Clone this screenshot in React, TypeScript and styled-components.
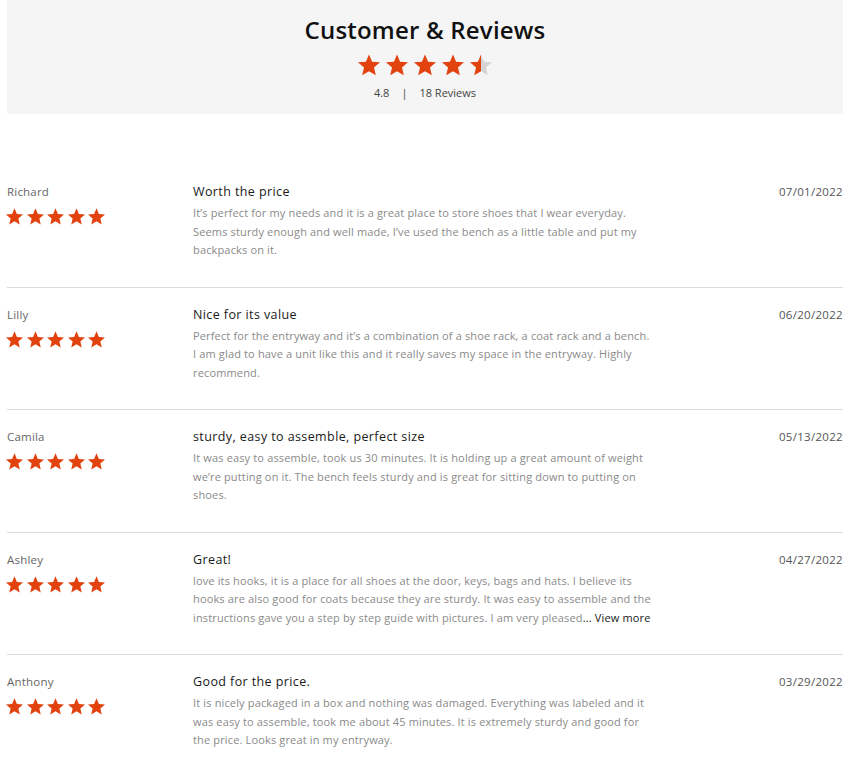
import React from "react";
import styled, { createGlobalStyle } from "styled-components";

const GlobalStyle = createGlobalStyle`
  html, body { margin: 0; padding: 0; background: #fff; }
  body { font-family: "Open Sans", "Liberation Sans", sans-serif; }
`;

const STAR_PATH =
  "M12 17.27L18.18 21l-1.64-7.03L22 9.24l-7.19-.61L12 2 9.19 8.63 2 9.24l5.46 4.73L5.82 21z";

const ORANGE = "#e2420e";

const Page = styled.div`
  padding: 0 7px;
`;

const Header = styled.header`
  background: #f5f5f5;
  height: 114px;
  display: flex;
  flex-direction: column;
  align-items: center;
  box-sizing: border-box;
  padding-top: 13px;
`;

const Title = styled.h1`
  margin: 0;
  font-size: 24px;
  line-height: 34px;
  font-weight: 600;
  color: #111;
  letter-spacing: 0.2px;
`;

const StarRow = styled.div<{ $gap: number }>`
  display: flex;
  gap: ${(p) => p.$gap}px;
  align-items: center;
`;

const HeaderStars = styled(StarRow)`
  margin-top: 7px;
`;

const Summary = styled.div`
  margin-top: 9px;
  font-size: 11px;
  line-height: 16px;
  color: #444;
  display: flex;
  gap: 12px;
`;

const List = styled.div`
  margin-top: 51px;
`;

const Row = styled.div`
  display: grid;
  grid-template-columns: 186px 1fr auto;
  padding: 18px 0 27px;
  border-bottom: 1px solid #dcdcdc;
  &:last-child {
    border-bottom: none;
  }
`;

const Author = styled.div`
  display: flex;
  flex-direction: column;
`;

const Name = styled.div`
  font-size: 11.5px;
  line-height: 18px;
  color: #666;
  font-weight: 500;
  letter-spacing: 0.2px;
`;

const AuthorStars = styled(StarRow)`
  margin-top: 7px;
  margin-left: -1px;
`;

const Content = styled.div`
  display: flex;
  flex-direction: column;
`;

const ReviewTitle = styled.div`
  font-size: 12.5px;
  line-height: 18px;
  font-weight: 500;
  color: #1a1a1a;
  letter-spacing: 0.4px;
`;

const Body = styled.div`
  margin-top: 3px;
  font-size: 11px;
  line-height: 18.5px;
  color: #8a8a8a;
  letter-spacing: 0.15px;
`;

const Line = styled.div`
  white-space: nowrap;
`;

const More = styled.span`
  color: #1a1a1a;
  font-weight: 500;
`;

const DateText = styled.div`
  font-size: 11.5px;
  line-height: 18px;
  font-weight: 500;
  color: #555;
  letter-spacing: 0.3px;
`;

const Star: React.FC<{ size: number; fill?: number; id?: string }> = ({
  size,
  fill = 1,
  id,
}) => {
  if (fill >= 1) {
    return (
      <svg width={size} height={size} viewBox="2 2 20 19.3">
        <path d={STAR_PATH} fill={ORANGE} />
      </svg>
    );
  }
  const gid = id || "half";
  return (
    <svg width={size} height={size} viewBox="2 2 20 19.3">
      <defs>
        <linearGradient id={gid} x1="0" x2="1" y1="0" y2="0">
          <stop offset={fill} stopColor={ORANGE} />
          <stop offset={fill} stopColor="#d4d4d4" />
        </linearGradient>
      </defs>
      <path d={STAR_PATH} fill={`url(#${gid})`} />
    </svg>
  );
};

type Review = {
  name: string;
  title: string;
  date: string;
  lines: string[];
  more?: boolean;
};

const reviews: Review[] = [
  {
    name: "Richard",
    title: "Worth the price",
    date: "07/01/2022",
    lines: [
      "It\u2019s perfect for my needs and it is a great place to store shoes that I wear everyday.",
      "Seems sturdy enough and well made, I\u2019ve used the bench as a little table and put my",
      "backpacks on it.",
    ],
  },
  {
    name: "Lilly",
    title: "Nice for its value",
    date: "06/20/2022",
    lines: [
      "Perfect for the entryway and it\u2019s a combination of a shoe rack, a coat rack and a bench.",
      "I am glad to have a unit like this and it really saves my space in the entryway. Highly",
      "recommend.",
    ],
  },
  {
    name: "Camila",
    title: "sturdy, easy to assemble, perfect size",
    date: "05/13/2022",
    lines: [
      "It was easy to assemble, took us 30 minutes. It is holding up a great amount of weight",
      "we\u2019re putting on it. The bench feels sturdy and is great for sitting down to putting on",
      "shoes.",
    ],
  },
  {
    name: "Ashley",
    title: "Great!",
    date: "04/27/2022",
    lines: [
      "love its hooks, it is a place for all shoes at the door, keys, bags and hats. I believe its",
      "hooks are also good for coats because they are sturdy. It was easy to assemble and the",
      "instructions gave you a step by step guide with pictures. I am very pleased",
    ],
    more: true,
  },
  {
    name: "Anthony",
    title: "Good for the price.",
    date: "03/29/2022",
    lines: [
      "It is nicely packaged in a box and nothing was damaged. Everything was labeled and it",
      "was easy to assemble, took me about 45 minutes. It is extremely sturdy and good for",
      "the price. Looks great in my entryway.",
    ],
  },
];

export default function App() {
  return (
    <Page>
      <GlobalStyle />
      <Header>
        <Title>Customer &amp; Reviews</Title>
        <HeaderStars $gap={6}>
          {[0, 1, 2, 3].map((i) => (
            <Star key={i} size={22} />
          ))}
          <Star size={22} fill={0.5} id="hdr-half" />
        </HeaderStars>
        <Summary>
          <span>4.8</span>
          <span>|</span>
          <span>18 Reviews</span>
        </Summary>
      </Header>
      <List>
        {reviews.map((r) => (
          <Row key={r.name}>
            <Author>
              <Name>{r.name}</Name>
              <AuthorStars $gap={3.5}>
                {[0, 1, 2, 3, 4].map((i) => (
                  <Star key={i} size={17} />
                ))}
              </AuthorStars>
            </Author>
            <Content>
              <ReviewTitle>{r.title}</ReviewTitle>
              <Body>
                {r.lines.map((l, i) => (
                  <Line key={i}>
                    {l}
                    {r.more && i === r.lines.length - 1 && (
                      <More>... View more</More>
                    )}
                  </Line>
                ))}
              </Body>
            </Content>
            <DateText>{r.date}</DateText>
          </Row>
        ))}
      </List>
    </Page>
  );
}
